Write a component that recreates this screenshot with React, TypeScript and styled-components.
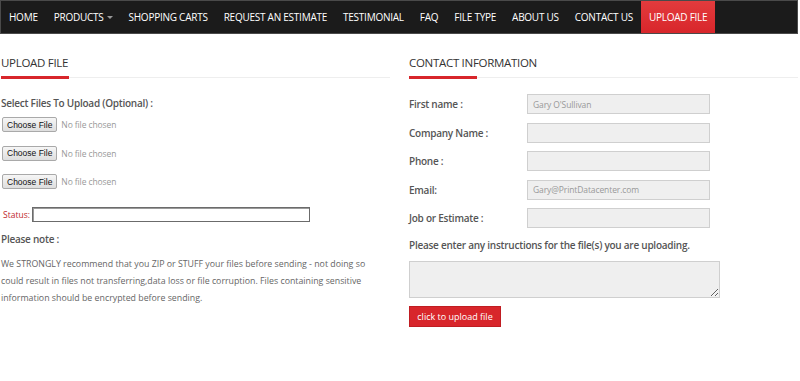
import React from 'react';
import styled, { createGlobalStyle } from 'styled-components';

const GlobalStyle = createGlobalStyle`
  html, body {
    margin: 0;
    padding: 0;
    background: #ffffff;
  }
  body {
    font-family: "Open Sans", "DejaVu Sans", sans-serif;
    color: #555;
  }
`;

const navItems = [
  { label: 'HOME' },
  { label: 'PRODUCTS', caret: true },
  { label: 'SHOPPING CARTS' },
  { label: 'REQUEST AN ESTIMATE' },
  { label: 'TESTIMONIAL' },
  { label: 'FAQ' },
  { label: 'FILE TYPE' },
  { label: 'ABOUT US' },
  { label: 'CONTACT US' },
  { label: 'UPLOAD FILE', active: true },
];

const contactFields = [
  { label: 'First name :', value: "Gary O'Sullivan" },
  { label: 'Company Name :', value: '' },
  { label: 'Phone :', value: '' },
  { label: 'Email:', value: 'Gary@PrintDatacenter.com' },
  { label: 'Job or Estimate :', value: '' },
];

function App() {
  return (
    <>
      <GlobalStyle />
      <Page>
        <NavBar>
          {navItems.map((item) => (
            <NavItem key={item.label} $active={item.active}>
              {item.label}
              {item.caret && <Caret />}
            </NavItem>
          ))}
        </NavBar>

        <Columns>
          <Column>
            <SectionTitle>UPLOAD FILE</SectionTitle>
            <FieldHeading>Select Files To Upload (Optional) :</FieldHeading>
            <FileList>
              {[0, 1, 2].map((i) => (
                <FileRow key={i}>
                  <ChooseButton>
                    <HiddenInput type="file" />
                    Choose File
                  </ChooseButton>
                  <NoFile>No file chosen</NoFile>
                </FileRow>
              ))}
            </FileList>
            <StatusRow>
              <StatusLabel>Status:</StatusLabel>
              <StatusInput type="text" readOnly />
            </StatusRow>
            <NoteHeading>Please note :</NoteHeading>
            <NoteText>
              We STRONGLY recommend that you ZIP or STUFF your files before sending - not doing so
              could result in files not transferring,data loss or file corruption. Files containing
              sensitive information should be encrypted before sending.
            </NoteText>
          </Column>

          <Column>
            <SectionTitle>CONTACT INFORMATION</SectionTitle>
            <ContactGrid>
              {contactFields.map((f) => (
                <React.Fragment key={f.label}>
                  <ContactLabel>{f.label}</ContactLabel>
                  <ContactInput type="text" defaultValue={f.value} readOnly />
                </React.Fragment>
              ))}
            </ContactGrid>
            <InstructionText>Please enter any instructions for the file(s) you are uploading.</InstructionText>
            <Instructions />
            <SubmitButton type="button">click to upload file</SubmitButton>
          </Column>
        </Columns>
      </Page>
    </>
  );
}

// Styled components
const Page = styled.div`
  width: 800px;
  height: 381px;
  overflow: hidden;
`;

const NavBar = styled.nav`
  display: flex;
  align-items: stretch;
  width: 796px;
  height: 32px;
  background: #1b1b1b;
  border: 1px solid #4a4a4a;
`;

const NavItem = styled.div<{ $active?: boolean }>`
  display: flex;
  align-items: center;
  padding: 0 8px;
  font-size: 10px;
  color: #ffffff;
  letter-spacing: -0.25px;
  white-space: nowrap;
  background: ${(p) => (p.$active ? 'linear-gradient(#e33b3d, #d8262b)' : 'transparent')};
`;

const Caret = styled.span`
  display: inline-block;
  margin-left: 3px;
  margin-top: 1px;
  border-left: 3px solid transparent;
  border-right: 3px solid transparent;
  border-top: 3px solid #999;
`;

const Columns = styled.div`
  display: grid;
  grid-template-columns: 389px 389px;
  column-gap: 19px;
  padding: 0 0 0 1px;
`;

const Column = styled.div`
  display: flex;
  flex-direction: column;
  align-items: flex-start;
`;

const SectionTitle = styled.h2`
  position: relative;
  align-self: stretch;
  margin: 20px 0 0;
  padding: 0 0 5px;
  font-size: 11.5px;
  letter-spacing: -0.3px;
  font-weight: 400;
  color: #333;
  line-height: 18px;
  border-bottom: 1px solid #eeeeee;

  &::after {
    content: '';
    position: absolute;
    left: 0;
    bottom: -2px;
    width: 68px;
    height: 3px;
    background: #d8262b;
  }
`;

const FieldHeading = styled.div`
  margin-top: 17px;
  font-size: 10px;
  letter-spacing: -0.25px;
  font-weight: 600;
  line-height: 16px;
  color: #555;
`;

const FileList = styled.div`
  display: flex;
  flex-direction: column;
  gap: 13.5px;
  margin-top: 6px;
`;

const FileRow = styled.div`
  display: flex;
  align-items: center;
  gap: 4px;
  height: 15px;
`;

const ChooseButton = styled.label`
  display: inline-flex;
  align-items: center;
  height: 13px;
  margin-left: 1px;
  padding: 0 4px;
  font-family: "Liberation Sans", Arial, sans-serif;
  font-size: 8.5px;
  color: #111;
  background: linear-gradient(#f6f6f6, #dedede);
  border: 1px solid #a9a9a9;
  border-radius: 2px;
  cursor: pointer;
`;

const HiddenInput = styled.input`
  display: none;
`;

const NoFile = styled.span`
  font-size: 8.5px;
  letter-spacing: -0.1px;
  color: #999;
`;

const StatusRow = styled.div`
  display: flex;
  align-items: center;
  gap: 2px;
  margin-top: 18px;
  padding-left: 2px;
`;

const StatusLabel = styled.span`
  font-size: 8.5px;
  color: #c0272d;
`;

const StatusInput = styled.input`
  box-sizing: border-box;
  width: 278px;
  height: 15px;
  margin: 0;
  padding: 0;
  border: 1px solid #6b6b6b;
  box-shadow: inset 1px 1px 0 #9a9a9a;
  background: #fff;
`;

const NoteHeading = styled.div`
  margin-top: 9px;
  font-size: 10px;
  letter-spacing: -0.25px;
  font-weight: 600;
  color: #555;
  line-height: 16px;
`;

const NoteText = styled.p`
  margin: 9px 0 0;
  width: 385px;
  font-size: 8.8px;
  line-height: 17px;
  color: #666;
`;

const ContactGrid = styled.div`
  display: grid;
  grid-template-columns: 118px 183px;
  row-gap: 8.5px;
  align-items: center;
  margin-top: 16px;
`;

const ContactLabel = styled.div`
  font-size: 10px;
  letter-spacing: -0.25px;
  font-weight: 600;
  color: #555;
`;

const ContactInput = styled.input`
  box-sizing: border-box;
  width: 183px;
  height: 20px;
  margin: 0;
  padding: 0 5px;
  font-family: "Open Sans", sans-serif;
  font-size: 8.5px;
  letter-spacing: -0.1px;
  color: #999;
  background: #efefef;
  border: 1px solid #cfcfcf;
  outline: none;
`;

const InstructionText = styled.div`
  margin-top: 9px;
  font-size: 10px;
  letter-spacing: -0.25px;
  font-weight: 600;
  color: #555;
  line-height: 16px;
`;

const Instructions = styled.textarea`
  box-sizing: border-box;
  width: 311px;
  height: 37px;
  margin: 8px 0 0;
  background: #efefef;
  border: 1px solid #cfcfcf;
  resize: both;
`;

const SubmitButton = styled.button`
  margin-top: 8px;
  width: 92px;
  height: 21px;
  padding: 0;
  font-family: "Open Sans", sans-serif;
  font-size: 9px;
  color: #fff;
  background: #d8262b;
  border: 1px solid #c01d22;
  cursor: pointer;
`;

export default App;
